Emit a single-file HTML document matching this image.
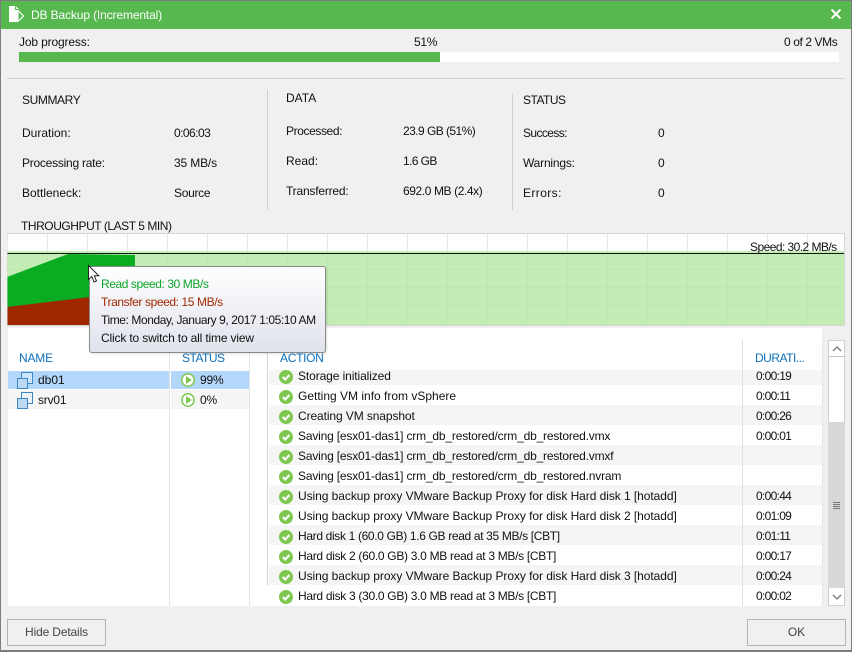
<!DOCTYPE html>
<html><head><meta charset="utf-8"><style>
html,body{margin:0;padding:0}
body{width:852px;height:652px;overflow:hidden;position:relative;background:#f0f0f0;font:12px/16px "Liberation Sans",sans-serif;color:#111}
.a,.t{position:absolute}
.t{white-space:nowrap;height:16px}
.h{color:#0b70bd}
.d{letter-spacing:-.7px;left:756px}
.sv{letter-spacing:-.18px}
.us{letter-spacing:-.06px}
.hd{letter-spacing:-.3px}
.btn{position:absolute;box-sizing:border-box;border:1px solid #b4b4b4;background:#f0f0f0;width:99px;height:27px;top:619px;text-align:center;line-height:25px;color:#444}
</style></head><body>
<div class="a" style="left:0;top:0;width:852px;height:652px;box-sizing:border-box;border:1px solid #7c7c7c;border-width:1px 1px 2px 1px"></div>
<div class="a" style="left:1px;top:1px;width:850px;height:28px;background:#56b84e"></div>
<svg class="a" style="left:8px;top:5px" width="17" height="19" viewBox="0 0 17 19"><path d="M1.5 1.5H7.5L10 4V16.5H1.5Z" fill="#fff" stroke="#fff"/><path d="M10.5 6L15.5 11L10.5 16" fill="none" stroke="#fff" stroke-width="1.2"/><path d="M7.5 1.5V4.5H10" fill="none" stroke="#56b84e"/></svg>
<div class="t" style="left:31px;top:7px;color:#fff;letter-spacing:-.13px">DB Backup (Incremental)</div>
<svg class="a" style="left:830px;top:8px" width="12" height="12"><path d="M1.5 1.5L10.5 10.5M10.5 1.5L1.5 10.5" stroke="#fff" stroke-width="2"/></svg>

<div class="t" style="left:19px;top:34px;letter-spacing:-.15px">Job progress:</div>
<div class="t" style="left:414px;top:34px;letter-spacing:-.3px">51%</div>
<div class="t" style="left:784px;top:34px;letter-spacing:-.4px">0 of 2 VMs</div>
<div class="a" style="left:19px;top:52px;width:820px;height:10px;background:#fff"></div>
<div class="a" style="left:19px;top:52px;width:421px;height:10px;background:#56b84e"></div>
<div class="a" style="left:7px;top:78px;width:838px;height:1px;background:#d0d0d0"></div>

<div class="t" style="left:22px;top:92px;letter-spacing:-.4px">SUMMARY</div>
<div class="t" style="left:22px;top:125px">Duration:</div><div class="t" style="left:174px;top:125px;letter-spacing:-.55px">0:06:03</div>
<div class="t" style="left:22px;top:155px;letter-spacing:-.25px">Processing rate:</div><div class="t" style="left:174px;top:155px;letter-spacing:-.15px">35 MB/s</div>
<div class="t" style="left:22px;top:185px">Bottleneck:</div><div class="t" style="left:174px;top:185px;letter-spacing:-.3px">Source</div>
<div class="a" style="left:267px;top:90px;width:1px;height:120px;background:#d0d0d0"></div>
<div class="t" style="left:286px;top:90px">DATA</div>
<div class="t" style="left:286px;top:123px;letter-spacing:-.4px">Processed:</div><div class="t" style="left:403px;top:123px;letter-spacing:-.55px">23.9 GB (51%)</div>
<div class="t" style="left:286px;top:153px">Read:</div><div class="t" style="left:403px;top:153px;letter-spacing:-.6px">1.6 GB</div>
<div class="t" style="left:286px;top:183px;letter-spacing:-.2px">Transferred:</div><div class="t" style="left:403px;top:183px;letter-spacing:-.4px">692.0 MB (2.4x)</div>
<div class="a" style="left:512px;top:93px;width:1px;height:117px;background:#d0d0d0"></div>
<div class="t" style="left:523px;top:92px;letter-spacing:-.5px">STATUS</div>
<div class="t" style="left:523px;top:125px;letter-spacing:-.6px">Success:</div><div class="t" style="left:658px;top:125px">0</div>
<div class="t" style="left:523px;top:155px;letter-spacing:-.2px">Warnings:</div><div class="t" style="left:658px;top:155px">0</div>
<div class="t" style="left:523px;top:185px;letter-spacing:.4px">Errors:</div><div class="t" style="left:658px;top:185px">0</div>

<div class="t" style="left:21px;top:218px;letter-spacing:-.45px">THROUGHPUT (LAST 5 MIN)</div>
<svg class="a" style="left:7px;top:233px" width="838" height="93" viewBox="7 233 838 93">
<rect x="7" y="233" width="838" height="93" fill="#fff"/>
<rect x="7" y="251" width="838" height="75" fill="#c3edb5"/>
<g stroke="#e6e6e6"><path d="M47.5 233V251M87.5 233V251M127.5 233V251M167.5 233V251M207.5 233V251M247.5 233V251M287.5 233V251M327.5 233V251M367.5 233V251M407.5 233V251M447.5 233V251M487.5 233V251M527.5 233V251M567.5 233V251M607.5 233V251M647.5 233V251M687.5 233V251M727.5 233V251M767.5 233V251M807.5 233V251"/></g>
<g stroke="#bbe8ac"><path d="M47.5 251V326M87.5 251V326M127.5 251V326M167.5 251V326M207.5 251V326M247.5 251V326M287.5 251V326M327.5 251V326M367.5 251V326M407.5 251V326M447.5 251V326M487.5 251V326M527.5 251V326M567.5 251V326M607.5 251V326M647.5 251V326M687.5 251V326M727.5 251V326M767.5 251V326M807.5 251V326M7 269.5H845M7 287.5H845M7 305.5H845"/></g>
<path d="M7 277L68 254L135 255V326H7Z" fill="#0aad22"/>
<path d="M7 307L90 297L135 292V326H7Z" fill="#a02800"/>
<rect x="7" y="253" width="838" height="1" fill="#111"/>
<rect x="7" y="233.500" width="837.500" height="92" fill="none" stroke="#d4d4d4"/>
</svg>
<div class="t" style="left:750px;top:239px;letter-spacing:-.55px">Speed: 30.2 MB/s</div>

<div class="a" style="left:8px;top:328px;width:814px;height:278px;background:#fff"></div>
<div class="a" style="left:822px;top:328px;width:23px;height:278px;background:#f0f0f0"></div>
<div class="a" style="left:8px;top:371px;width:161px;height:18px;background:#b3d7fb"></div>
<div class="a" style="left:171px;top:371px;width:78px;height:18px;background:#b3d7fb"></div>
<div class="a" style="left:8px;top:390px;width:161px;height:19px;background:#f5f5f5"></div>
<div class="a" style="left:171px;top:390px;width:78px;height:19px;background:#f5f5f5"></div>
<div class="a" style="left:269px;top:370px;width:553px;height:15px;background:#f5f5f5"></div>
<div class="a" style="left:269px;top:405px;width:553px;height:20px;background:#f5f5f5"></div>
<div class="a" style="left:269px;top:445px;width:553px;height:20px;background:#f5f5f5"></div>
<div class="a" style="left:269px;top:485px;width:553px;height:20px;background:#f5f5f5"></div>
<div class="a" style="left:269px;top:525px;width:553px;height:20px;background:#f5f5f5"></div>
<div class="a" style="left:269px;top:565px;width:553px;height:20px;background:#f5f5f5"></div>
<div class="a" style="left:169px;top:328px;width:1px;height:278px;background:#e4e4e4"></div>
<div class="a" style="left:249px;top:328px;width:1px;height:278px;background:#e4e4e4"></div>
<div class="a" style="left:267px;top:340px;width:1px;height:246px;background:#d4d4d4"></div>
<div class="a" style="left:742px;top:340px;width:1px;height:266px;background:#e0e0e0"></div>
<div class="a" style="left:822px;top:340px;width:1px;height:266px;background:#e4e4e4"></div>

<div class="t h" style="left:19px;top:350px;letter-spacing:-.2px">NAME</div>
<div class="t h" style="left:182px;top:350px;letter-spacing:-.5px">STATUS</div>
<div class="t h" style="left:280px;top:350px;letter-spacing:-.3px">ACTION</div>
<div class="t h" style="left:755px;top:350px;letter-spacing:-.5px">DURATI...</div>

<svg width="0" height="0" style="position:absolute"><defs>
<g id="vm"><rect x="4.500" y="0.500" width="11" height="11" fill="#e8f1fa" fill-opacity=".5" stroke="#3d86c6"/><rect x="0.500" y="6.500" width="10" height="10" fill="#bcd8f2" stroke="#3d86c6"/></g>
<g id="pl"><circle cx="7" cy="7" r="6.200" fill="#fff" stroke="#7ec850" stroke-width="1.500"/><path d="M5 3L10.800 7L5 11Z" fill="#7ec850"/></g>
<g id="ck"><circle cx="7" cy="7" r="7" fill="#7ec850"/><path d="M3.800 7L6.200 9.500L10.400 5" fill="none" stroke="#fff" stroke-width="2.100"/></g>
</defs></svg>

<svg class="a" style="left:17px;top:372px" width="17" height="17"><use href="#vm"/></svg>
<div class="t" style="left:38px;top:372px">db01</div>
<svg class="a" style="left:181px;top:373px" width="14" height="14"><use href="#pl"/></svg>
<div class="t" style="left:200px;top:372px;letter-spacing:-.2px">99%</div>
<svg class="a" style="left:17px;top:392px" width="17" height="17"><use href="#vm"/></svg>
<div class="t" style="left:38px;top:392px;letter-spacing:-.2px">srv01</div>
<svg class="a" style="left:181px;top:393px" width="14" height="14"><use href="#pl"/></svg>
<div class="t" style="left:200px;top:392px;letter-spacing:-.2px">0%</div>

<svg class="a" style="left:279px;top:370px" width="14" height="14"><use href="#ck"/></svg><div class="t" style="left:298px;top:368px;letter-spacing:-.1px">Storage initialized</div><div class="t d" style="top:368px">0:00:19</div>
<svg class="a" style="left:279px;top:390px" width="14" height="14"><use href="#ck"/></svg><div class="t" style="left:298px;top:388px">Getting VM info from vSphere</div><div class="t d" style="top:388px">0:00:11</div>
<svg class="a" style="left:279px;top:410px" width="14" height="14"><use href="#ck"/></svg><div class="t" style="left:298px;top:408px;letter-spacing:-.1px">Creating VM snapshot</div><div class="t d" style="top:408px">0:00:26</div>
<svg class="a" style="left:279px;top:430px" width="14" height="14"><use href="#ck"/></svg><div class="t sv" style="left:298px;top:428px">Saving [esx01-das1] crm_db_restored/crm_db_restored.vmx</div><div class="t d" style="top:428px">0:00:01</div>
<svg class="a" style="left:279px;top:450px" width="14" height="14"><use href="#ck"/></svg><div class="t sv" style="left:298px;top:448px">Saving [esx01-das1] crm_db_restored/crm_db_restored.vmxf</div>
<svg class="a" style="left:279px;top:470px" width="14" height="14"><use href="#ck"/></svg><div class="t sv" style="left:298px;top:468px">Saving [esx01-das1] crm_db_restored/crm_db_restored.nvram</div>
<svg class="a" style="left:279px;top:490px" width="14" height="14"><use href="#ck"/></svg><div class="t us" style="left:298px;top:488px">Using backup proxy VMware Backup Proxy for disk Hard disk 1 [hotadd]</div><div class="t d" style="top:488px">0:00:44</div>
<svg class="a" style="left:279px;top:510px" width="14" height="14"><use href="#ck"/></svg><div class="t us" style="left:298px;top:508px">Using backup proxy VMware Backup Proxy for disk Hard disk 2 [hotadd]</div><div class="t d" style="top:508px">0:01:09</div>
<svg class="a" style="left:279px;top:530px" width="14" height="14"><use href="#ck"/></svg><div class="t hd" style="left:298px;top:528px;letter-spacing:-.34px">Hard disk 1 (60.0 GB) 1.6 GB read at 35 MB/s [CBT]</div><div class="t d" style="top:528px">0:01:11</div>
<svg class="a" style="left:279px;top:550px" width="14" height="14"><use href="#ck"/></svg><div class="t hd" style="left:298px;top:548px">Hard disk 2 (60.0 GB) 3.0 MB read at 3 MB/s [CBT]</div><div class="t d" style="top:548px">0:00:17</div>
<svg class="a" style="left:279px;top:570px" width="14" height="14"><use href="#ck"/></svg><div class="t us" style="left:298px;top:568px">Using backup proxy VMware Backup Proxy for disk Hard disk 3 [hotadd]</div><div class="t d" style="top:568px">0:00:24</div>
<svg class="a" style="left:279px;top:590px" width="14" height="14"><use href="#ck"/></svg><div class="t hd" style="left:298px;top:588px">Hard disk 3 (30.0 GB) 3.0 MB read at 3 MB/s [CBT]</div><div class="t d" style="top:588px">0:00:02</div>

<div class="a" style="left:828px;top:340px;width:17px;height:266px;box-sizing:border-box;background:#fff;border:1px solid #d0d0d0"></div>
<div class="a" style="left:828px;top:356px;width:17px;height:1px;background:#c4c4c4"></div>
<svg class="a" style="left:832px;top:346px" width="10" height="6"><path d="M1 5L5 1L9 5" fill="none" stroke="#777" stroke-width="1.300"/></svg>
<div class="a" style="left:828px;top:422px;width:17px;height:166px;background:#d8d8d8"></div>
<div class="a" style="left:833px;top:502px;width:7px;height:1px;background:#777;box-shadow:0 2px 0 #777,0 4px 0 #777,0 6px 0 #777"></div>
<svg class="a" style="left:832px;top:594px" width="10" height="6"><path d="M1 1L5 5L9 1" fill="none" stroke="#777" stroke-width="1.300"/></svg>

<div class="a" style="left:89px;top:266px;width:237px;height:87px;box-sizing:border-box;border:1px solid #8a8a8a;border-radius:3px;background:linear-gradient(#ffffff,#e0e2ec);box-shadow:1px 1px 2px rgba(0,0,0,.12)"></div>
<div class="t" style="left:101px;top:276px;color:#0fa526;letter-spacing:-.42px">Read speed: 30 MB/s</div>
<div class="t" style="left:101px;top:294px;color:#a02800;letter-spacing:-.4px">Transfer speed: 15 MB/s</div>
<div class="t" style="left:101px;top:312px;letter-spacing:-.42px">Time: Monday, January 9, 2017 1:05:10 AM</div>
<div class="t" style="left:101px;top:330px;letter-spacing:-.16px">Click to switch to all time view</div>
<svg class="a" style="left:87px;top:264px" width="14" height="20"><path d="M1.500 1.500V15.500L4.800 12.500L7 18L9.500 17L7.300 11.800H11.800Z" fill="#fff" stroke="#222" stroke-width="1"/></svg>

<div class="btn" style="left:7px;letter-spacing:-.15px">Hide Details</div>
<div class="btn" style="left:747px">OK</div>
</body></html>
